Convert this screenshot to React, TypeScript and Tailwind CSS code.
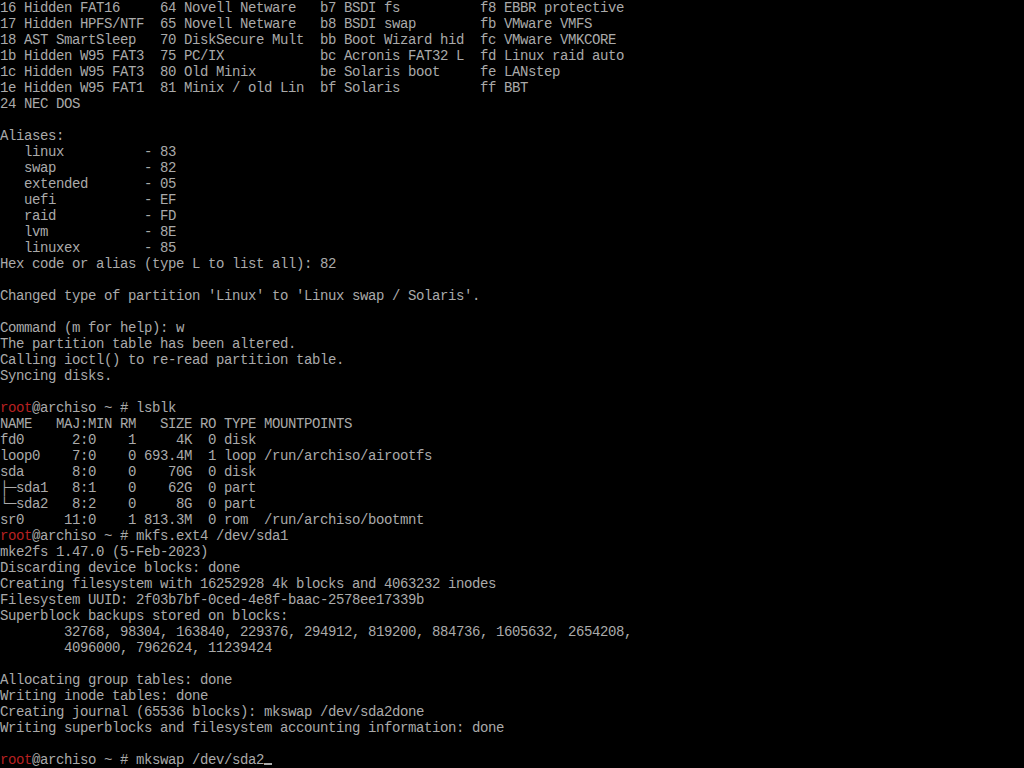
import React from "react";

const P = "__PROMPT__";

const lines: string[] = [
  "16 Hidden FAT16     64 Novell Netware   b7 BSDI fs          f8 EBBR protective",
  "17 Hidden HPFS/NTF  65 Novell Netware   b8 BSDI swap        fb VMware VMFS",
  "18 AST SmartSleep   70 DiskSecure Mult  bb Boot Wizard hid  fc VMware VMKCORE",
  "1b Hidden W95 FAT3  75 PC/IX            bc Acronis FAT32 L  fd Linux raid auto",
  "1c Hidden W95 FAT3  80 Old Minix        be Solaris boot     fe LANstep",
  "1e Hidden W95 FAT1  81 Minix / old Lin  bf Solaris          ff BBT",
  "24 NEC DOS",
  "",
  "Aliases:",
  "   linux          - 83",
  "   swap           - 82",
  "   extended       - 05",
  "   uefi           - EF",
  "   raid           - FD",
  "   lvm            - 8E",
  "   linuxex        - 85",
  "Hex code or alias (type L to list all): 82",
  "",
  "Changed type of partition 'Linux' to 'Linux swap / Solaris'.",
  "",
  "Command (m for help): w",
  "The partition table has been altered.",
  "Calling ioctl() to re-read partition table.",
  "Syncing disks.",
  "",
  P + "lsblk",
  "NAME   MAJ:MIN RM   SIZE RO TYPE MOUNTPOINTS",
  "fd0      2:0    1     4K  0 disk",
  "loop0    7:0    0 693.4M  1 loop /run/archiso/airootfs",
  "sda      8:0    0    70G  0 disk",
  "\u251c\u2500sda1   8:1    0    62G  0 part",
  "\u2514\u2500sda2   8:2    0     8G  0 part",
  "sr0     11:0    1 813.3M  0 rom  /run/archiso/bootmnt",
  P + "mkfs.ext4 /dev/sda1",
  "mke2fs 1.47.0 (5-Feb-2023)",
  "Discarding device blocks: done",
  "Creating filesystem with 16252928 4k blocks and 4063232 inodes",
  "Filesystem UUID: 2f03b7bf-0ced-4e8f-baac-2578ee17339b",
  "Superblock backups stored on blocks:",
  "        32768, 98304, 163840, 229376, 294912, 819200, 884736, 1605632, 2654208,",
  "        4096000, 7962624, 11239424",
  "",
  "Allocating group tables: done",
  "Writing inode tables: done",
  "Creating journal (65536 blocks): mkswap /dev/sda2done",
  "Writing superblocks and filesystem accounting information: done",
  "",
  P + "mkswap /dev/sda2",
];

function Line({ text, last }: { text: string; last: boolean }) {
  if (text.startsWith(P)) {
    const cmd = text.slice(P.length);
    return (
      <div className="h-4 leading-4 whitespace-pre">
        <span className="text-[#b82020]">root</span>
        {"@archiso ~ # " + cmd}
        {last && (
          <span className="inline-block w-2 h-4 align-top relative">
            <span className="absolute left-0 right-0 bottom-[3px] h-[2px] bg-[#aaaaaa]" />
          </span>
        )}
      </div>
    );
  }
  return <div className="h-4 leading-4 whitespace-pre">{text === "" ? "\u00a0" : text}</div>;
}

export default function App() {
  return (
    <div
      className="w-[1024px] h-[768px] bg-black text-[#aaaaaa] text-[14px] tracking-[-0.4px] overflow-hidden"
      style={{ fontFamily: '"Liberation Mono", "DejaVu Sans Mono", monospace' }}
    >
      {lines.map((l, i) => (
        <Line key={i} text={l} last={i === lines.length - 1} />
      ))}
    </div>
  );
}
